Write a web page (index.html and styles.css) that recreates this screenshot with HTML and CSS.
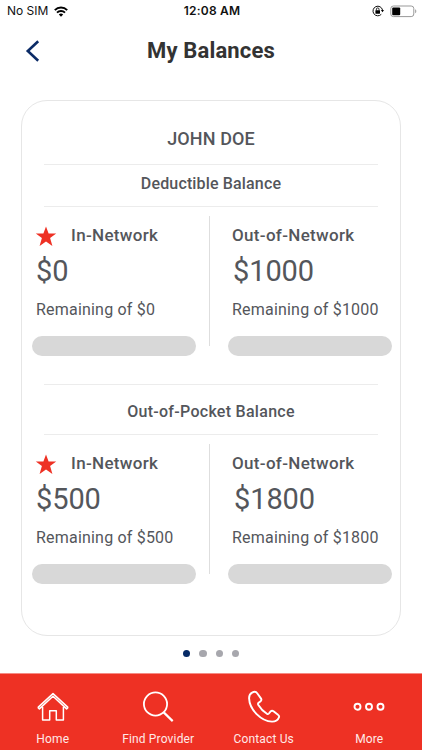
FILE: index.html
```html
<!DOCTYPE html>
<html lang="en">
<head>
<meta charset="utf-8">
<meta name="viewport" content="width=device-width, initial-scale=1">
<title>My Balances</title>
<link rel="stylesheet" href="styles.css">
</head>
<body>
<div class="status">
  <div class="carrier"><span>No SIM</span>
    <svg width="14" height="11" viewBox="0 0 14 11"><g fill="none" stroke="#000" stroke-width="2"><path d="M.8 4.100a9 9 0 0 1 12.400 0"/><path d="M3 6.600a5.800 5.800 0 0 1 8 0"/></g><path d="M4.800 8.400a3.300 3.300 0 0 1 4.400 0L7 10.700z"/></svg>
  </div>
  <span class="time">12:08 AM</span>
  <div class="power">
    <svg width="12" height="12" viewBox="0 0 12 12"><path d="M9.300 9.300A4.800 4.800 0 1 1 10.500 5" fill="none" stroke="#111" stroke-width="1"/><path d="M8.900 5h3.100l-1.500 2.300z"/><rect x="3.400" y="5.200" width="4.600" height="3.500" rx=".4"/><path d="M4.400 5.500V4.200a1.300 1.300 0 0 1 2.600 0v1.300" fill="none" stroke="#111" stroke-width=".9"/></svg>
    <svg width="27" height="13" viewBox="0 0 27 13"><rect x=".8" y="1" width="23" height="10.600" rx="2.600" fill="#fff" stroke="#999" stroke-width="1"/><rect x="2.200" y="2.400" width="8" height="7.800" rx="1"/><path d="M25.200 4.300c1.500.5 1.500 3.500 0 4z" fill="#999"/></svg>
  </div>
</div>
<header class="header">
  <svg class="back" width="16" height="24" viewBox="0 0 16 24"><path d="M14.200 2.300 3.800 12l10.400 9.700" fill="none" stroke="#0b2b66" stroke-width="2.600"/></svg>
  <h1>My Balances</h1>
</header>
<main class="card">
  <h2 class="name">JOHN DOE</h2>
  <section class="balance">
    <h3>Deductible Balance</h3>
    <div class="networks">
      <div class="network in">
        <div class="label"><svg width="22" height="21" viewBox="0 0 22 21"><path d="m11 .4 2.600 7h7.600l-6.100 4.700 2.300 7.800L11 15.400l-6.400 4.500 2.300-7.800L.8 7.400h7.600z" fill="#ee3124"/></svg><span>In-Network</span></div>
        <div class="amount">$0</div>
        <div class="remaining">Remaining of $0</div>
        <div class="bar"></div>
      </div>
      <div class="network out">
        <div class="label"><span>Out-of-Network</span></div>
        <div class="amount">$1000</div>
        <div class="remaining">Remaining of $1000</div>
        <div class="bar"></div>
      </div>
    </div>
  </section>
  <section class="balance pocket">
    <h3>Out-of-Pocket Balance</h3>
    <div class="networks">
      <div class="network in">
        <div class="label"><svg width="22" height="21" viewBox="0 0 22 21"><path d="m11 .4 2.600 7h7.600l-6.100 4.700 2.300 7.800L11 15.400l-6.400 4.500 2.300-7.800L.8 7.400h7.600z" fill="#ee3124"/></svg><span>In-Network</span></div>
        <div class="amount">$500</div>
        <div class="remaining">Remaining of $500</div>
        <div class="bar"></div>
      </div>
      <div class="network out">
        <div class="label"><span>Out-of-Network</span></div>
        <div class="amount">$1800</div>
        <div class="remaining">Remaining of $1800</div>
        <div class="bar"></div>
      </div>
    </div>
  </section>
</main>
<div class="dots"><i class="on"></i><i></i><i></i><i></i></div>
<nav class="tabs">
  <a class="tab"><svg width="34" height="34" viewBox="0 0 34 34"><path d="M6.600 17v13h7.100V20.800h6.600V30h7.100V17M2.300 17.100v.8l1.100 1L17 6.200l13.600 12.700 1.100-1v-.8L17 3.600z" fill="none" stroke="#fff" stroke-width="1.500" stroke-linejoin="round"/></svg><span>Home</span></a>
  <a class="tab"><svg width="34" height="34" viewBox="0 0 34 34"><circle cx="14.500" cy="14" r="11.600" fill="none" stroke="#fff" stroke-width="1.800"/><path d="m22.700 22.400 9 8.700" stroke="#fff" stroke-width="2.200"/></svg><span>Find Provider</span></a>
  <a class="tab"><svg width="34" height="34" viewBox="0 0 34 34"><path d="M5.100 2.600C2.800 3.800 2 5.600 2.100 8.400 2.500 19.600 14.200 31.400 25 31.600c3.500 0 6-1.300 7-4.300.4-1.200-.1-1.900-1-2.500l-4.500-3.600c-1-.8-2-.7-2.900.2l-1.700 2.100c-.6.700-1.300.8-2 .3-3.800-2.400-6.400-5.300-8.700-9.100-.4-.8-.3-1.300.4-1.900l2-1.600c1-.9 1-1.800.3-2.800L10.200 3.300C9.100 1.500 7.100 1.500 5.100 2.600z" fill="none" stroke="#fff" stroke-width="1.900" stroke-linejoin="round"/></svg><span>Contact Us</span></a>
  <a class="tab"><svg width="34" height="34" viewBox="0 0 34 34"><g fill="none" stroke="#fff" stroke-width="1.900"><circle cx="5.500" cy="16.700" r="3"/><circle cx="17" cy="16.700" r="3"/><circle cx="28.500" cy="16.700" r="3"/></g></svg><span>More</span></a>
</nav>
</body>
</html>
```
FILE: styles.css
```css
* { box-sizing: border-box; }
body {
  margin: 0;
  width: 422px;
  height: 750px;
  display: flex;
  flex-direction: column;
  overflow: hidden;
  background: #fff;
  color: #54565b;
  font-family: Roboto, "Liberation Sans", sans-serif;
}
svg { display: block; flex: none; }
h1, h2, h3 { margin: 0; }

.status {
  height: 22px;
  padding: 0 5px 0 7px;
  display: grid;
  grid-template-columns: 1fr auto 1fr;
  align-items: center;
  font: 12px/22px Inter, sans-serif;
  color: #111;
}
.carrier { display: flex; align-items: center; gap: 6px; }
.time { font-weight: 600; letter-spacing: .2px; }
.power { display: flex; align-items: center; justify-content: flex-end; gap: 6px; }

.header {
  height: 78px;
  padding: 17px 24px 0;
  display: grid;
  grid-template-columns: 16px 1fr 16px;
  align-items: start;
}
.header h1 {
  text-align: center;
  font-size: 22px;
  line-height: 24px;
  font-weight: 700;
  letter-spacing: .15px;
  color: #333;
}

.card {
  width: 380px;
  height: 536px;
  margin: 0 0 0 21px;
  padding-top: 24px;
  border: 1px solid #e6e6e6;
  border-radius: 26px;
}
.name {
  height: 39px;
  text-align: center;
  font-size: 18px;
  line-height: 27px;
  font-weight: 500;
  letter-spacing: .1px;
}
.balance { height: 220px; }
.balance h3 {
  height: 43px;
  margin: 0 22px;
  border: solid #ececec;
  border-width: 1px 0;
  text-align: center;
  font-size: 16px;
  line-height: 37px;
  font-weight: 500;
  letter-spacing: .15px;
}
.pocket h3 { height: 51px; line-height: 53px; letter-spacing: .28px; }
.networks {
  display: grid;
  grid-template-columns: 188px 190px;
  padding-top: 9px;
}
.network { height: 130px; }
.in { border-right: 1px solid #dedede; padding-left: 14px; }
.out { padding-left: 22px; }
.label {
  display: flex;
  align-items: center;
  height: 38px;
  font-size: 17px;
  line-height: 20px;
  font-weight: 500;
  letter-spacing: .32px;
}
.label span { padding-bottom: 1px; }
.in .label svg { margin: 2px 14px 0 -1px; }
.amount { height: 34px; font-size: 29px; line-height: 34px; letter-spacing: -.1px; }
.out .amount { padding-left: 1px; }
.pocket .out .amount { padding-left: 2px; }
.remaining { height: 48px; font-size: 16px; line-height: 44px; letter-spacing: .2px; }
.bar {
  width: 164px;
  height: 20px;
  border-radius: 10px;
  background: #d8d8d8;
}
.in .bar { margin-left: -4px; }
.out .bar { margin-left: -4px; }

.dots {
  height: 37px;
  padding-top: 14px;
  display: flex;
  justify-content: center;
  gap: 9px;
}
.dots i { width: 7.300px; height: 7.300px; border-radius: 50%; background: #a7a7ad; }
.dots .on { background: #062a66; }

.tabs {
  height: 77px;
  background: #ee3124;
  border-top: 1px solid #f58b84;
  display: grid;
  grid-template-columns: repeat(4, 105.500px);
}
.tab {
  display: flex;
  flex-direction: column;
  align-items: center;
  padding-top: 16px;
  gap: 7px;
  color: #ffe9e7;
  font-size: 12px;
  line-height: 17px;
  letter-spacing: .15px;
}
```
